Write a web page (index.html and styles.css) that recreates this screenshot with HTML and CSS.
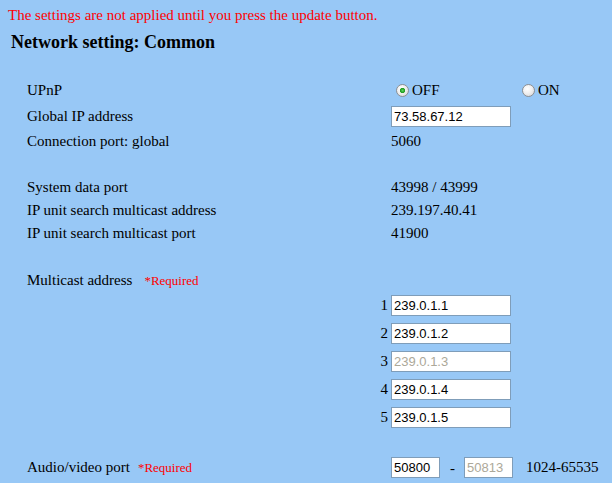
FILE: index.html
```html
<!DOCTYPE html>
<html lang="en">
<head>
  <meta charset="UTF-8" />
  <title>Network setting: Common</title>
  <link rel="stylesheet" href="styles.css">
</head>
<body>
  <p class="notice">The settings are not applied until you press the update button.</p>
  <h1 class="title">Network setting: Common</h1>

  <div class="form">
    <div class="row h26">
      <div class="label">UPnP</div>
      <div class="value">
        <label class="opt"><input type="radio" class="radio" name="upnp" checked>OFF</label>
        <label class="opt"><input type="radio" class="radio" name="upnp">ON</label>
      </div>
    </div>
    <div class="row h26">
      <div class="label">Global IP address</div>
      <div class="value"><input type="text" class="field" value="73.58.67.12"></div>
    </div>
    <div class="row h24">
      <div class="label">Connection port: global</div>
      <div class="value">5060</div>
    </div>

    <div class="row h23 spaced">
      <div class="label">System data port</div>
      <div class="value">43998 / 43999</div>
    </div>
    <div class="row h23">
      <div class="label">IP unit search multicast address</div>
      <div class="value">239.197.40.41</div>
    </div>
    <div class="row h23">
      <div class="label">IP unit search multicast port</div>
      <div class="value">41900</div>
    </div>

    <div class="row h22 spaced2">
      <div class="label">Multicast address<span class="req req-wide">*Required</span></div>
    </div>
    <div class="row h28">
      <div class="label num">1</div>
      <div class="value"><input type="text" class="field" value="239.0.1.1"></div>
    </div>
    <div class="row h28">
      <div class="label num">2</div>
      <div class="value"><input type="text" class="field" value="239.0.1.2"></div>
    </div>
    <div class="row h28">
      <div class="label num">3</div>
      <div class="value"><input type="text" class="field off" value="239.0.1.3" disabled></div>
    </div>
    <div class="row h28">
      <div class="label num">4</div>
      <div class="value"><input type="text" class="field" value="239.0.1.4"></div>
    </div>
    <div class="row h28">
      <div class="label num">5</div>
      <div class="value"><input type="text" class="field" value="239.0.1.5"></div>
    </div>

    <div class="row h28 spaced3">
      <div class="label">Audio/video port<span class="req">*Required</span></div>
      <div class="value">
        <input type="text" class="field port" value="50800">
        <span class="dash">-</span>
        <input type="text" class="field port off" value="50813" disabled>
        <span class="range">1024-65535</span>
      </div>
    </div>
  </div>
</body>
</html>
```

FILE: styles.css
```css
body {
  margin: 0;
  padding: 7px 8px 0;
  background-color: #98c8f6;
  font-family: "Liberation Serif", "Times New Roman", serif;
  font-size: 15px;
  line-height: 17px;
  color: #000;
}
.notice {
  margin: 0;
  color: #ff0000;
}
.title {
  margin: 7px 0 0 3px;
  font-size: 18px;
  line-height: 22px;
  font-weight: bold;
}
.form {
  margin-top: 24px;
  padding-left: 19px;
}
.row {
  display: flex;
  align-items: center;
}
.h22 { height: 22px; }
.h23 { height: 23px; }
.h24 { height: 24px; }
.h26 { height: 26px; }
.h28 { height: 28px; }
.spaced { margin-top: 23px; }
.spaced2 { margin-top: 24px; }
.spaced3 { margin-top: 22px; }
.label {
  width: 364px;
  flex: none;
  white-space: nowrap;
}
.label.num {
  text-align: right;
  padding-right: 3px;
  box-sizing: border-box;
}
.value {
  display: flex;
  align-items: center;
  white-space: nowrap;
}
.req {
  color: #ff0000;
  font-size: 13px;
  margin-left: 8px;
}
.req-wide {
  margin-left: 12px;
}
.opt {
  display: flex;
  align-items: center;
  width: 126px;
}
.opt:last-child {
  width: auto;
}
.radio {
  appearance: none;
  -webkit-appearance: none;
  width: 13px;
  height: 13px;
  margin: 1px 3px 0 5px;
  border: 1px solid #8c8f93;
  border-radius: 50%;
  background: radial-gradient(circle at 40% 35%, #ffffff 0, #f0f0f0 45%, #cfd1d4 100%);
  box-sizing: border-box;
}
.radio:checked {
  background:
    radial-gradient(circle, #5fd45f 0, #1e9c1e 2.2px, rgba(30, 156, 30, 0) 3px),
    radial-gradient(circle at 40% 35%, #ffffff 0, #f0f0f0 45%, #cfd1d4 100%);
}
.field {
  width: 120px;
  height: 21px;
  margin: 0;
  padding: 0 2px;
  border: 1px solid #7f9db9;
  background: #fff;
  box-sizing: border-box;
  font-family: "Liberation Sans", Arial, sans-serif;
  font-size: 13px;
  color: #000;
}
.field.off {
  color: #aca899;
  background: #fff;
}
.field.port {
  width: 49px;
}
.dash {
  margin: 2px 9px 0 10px;
}
.range {
  margin-left: 13px;
}
```
